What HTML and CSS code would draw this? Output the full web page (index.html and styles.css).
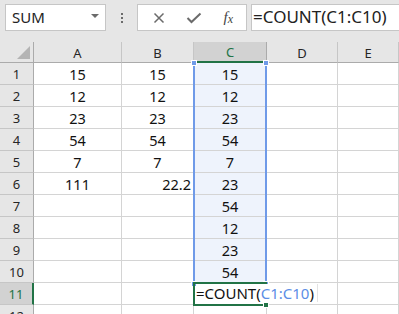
FILE: index.html
```html
<!DOCTYPE html>
<html lang="en">
<head>
    <meta charset="UTF-8">
    <title>Sheet</title>
    <link rel="stylesheet" href="styles.css">
</head>
<body>
    <div class="toolbar">
        <div class="name-box">
            <span>SUM</span>
            <span class="caret"></span>
        </div>
        <div class="grip"><i></i><i></i><i></i></div>
        <div class="fx-buttons">
            <svg width="12" height="12" viewBox="0 0 12 12"><path d="M1.5 1.5 L10.5 10.5 M10.5 1.5 L1.5 10.5" stroke="#6b6b6b" stroke-width="1.5" fill="none"/></svg>
            <svg width="16" height="12" viewBox="0 0 16 12"><path d="M1.5 6 L5.5 10 L14.5 1.5" stroke="#6b6b6b" stroke-width="2" fill="none"/></svg>
            <span class="fx">f<sub>x</sub></span>
        </div>
        <div class="formula-input">=COUNT(C1:C10)</div>
    </div>

    <div class="sheet" id="sheet">
        <div class="corner"><span class="tri"></span></div>
        <div class="col-head">A</div>
        <div class="col-head">B</div>
        <div class="col-head active">C</div>
        <div class="col-head">D</div>
        <div class="col-head">E</div>
    </div>

    <script src="script.js"></script>
</body>
</html>
```

FILE: styles.css
```css
* {
    margin: 0;
    padding: 0;
    box-sizing: border-box;
}

body {
    font-family: 'Noto Sans', 'Segoe UI', sans-serif;
    background: #fff;
    width: 399px;
    height: 314px;
    overflow: hidden;
    color: #000;
}

/* formula bar */
.toolbar {
    height: 42px;
    background: #e6e6e6;
    display: flex;
    align-items: flex-start;
    padding: 4px 0 0 5px;
}

.name-box {
    width: 101px;
    height: 27px;
    background: #fff;
    border: 1px solid #c6c6c6;
    display: flex;
    align-items: center;
    justify-content: space-between;
    padding: 0 6px 1px 6px;
    font-size: 15px;
    color: #222;
}

.caret {
    width: 0;
    height: 0;
    border-left: 4px solid transparent;
    border-right: 4px solid transparent;
    border-top: 4px solid #6b6b6b;
    margin-bottom: 2px;
}

.grip {
    width: 31px;
    height: 27px;
    display: flex;
    flex-direction: column;
    align-items: center;
    justify-content: center;
    gap: 2px;
}

.grip i {
    display: block;
    width: 2px;
    height: 2px;
    background: #6b6b6b;
}

.fx-buttons {
    width: 110px;
    height: 27px;
    background: #fff;
    border: 1px solid #c6c6c6;
    display: flex;
    align-items: center;
    justify-content: space-between;
    padding: 0 13px 0 15px;
}

.fx {
    font-family: 'Liberation Serif', serif;
    font-style: italic;
    font-size: 15px;
    color: #444;
}

.fx sub {
    font-size: 12px;
    vertical-align: -1px;
}

.formula-input {
    flex: 1;
    height: 27px;
    margin-left: 4px;
    background: #fff;
    border: 1px solid #c6c6c6;
    border-right: none;
    font-size: 17px;
    line-height: 24px;
    padding-left: 1px;
    color: #222;
    white-space: nowrap;
}

/* grid */
.sheet {
    display: grid;
    grid-template-columns: 34px 88px 72px 73px 71px 61px;
    grid-template-rows: 21px repeat(12, 22px);
    font-size: 14.5px;
}

.corner,
.col-head,
.row-head {
    background: #e6e6e6;
    color: #262626;
    font-size: 13px;
    display: flex;
    align-items: center;
    justify-content: center;
}

.corner {
    border-right: 1px solid #ababab;
    border-bottom: 1px solid #ababab;
    position: relative;
}

.tri {
    position: absolute;
    right: 3px;
    bottom: 3px;
    width: 0;
    height: 0;
    border-left: 13px solid transparent;
    border-bottom: 13px solid #b4b4b4;
}

.col-head {
    border-right: 1px solid #c6c6c6;
    border-bottom: 1px solid #ababab;
    padding-top: 1px;
}

.col-head.active {
    background: #d2d2d2;
    color: #217346;
    border-right-color: #ababab;
    border-bottom: 2px solid #217346;
}

.row-head {
    border-right: 1px solid #ababab;
    border-bottom: 1px solid #c6c6c6;
    padding-top: 1px;
}

.row-head.active {
    background: #d2d2d2;
    color: #217346;
    border-right: 2px solid #217346;
}

.cell {
    border-right: 1px solid #d4d4d4;
    border-bottom: 1px solid #d4d4d4;
    display: flex;
    align-items: center;
    justify-content: center;
    padding-top: 1px;
    color: #111;
    white-space: nowrap;
}

.cell.right {
    justify-content: flex-end;
    padding-right: 2px;
}

.cell.sel {
    background: #eef3fc;
}

/* selection and active cell */
.range {
    grid-column: 4;
    grid-row: 2 / 12;
    margin: 0 0 -1px -1px;
    border-left: 2px solid #6f9ae8;
    border-right: 2px solid #6f9ae8;
    position: relative;
    z-index: 2;
}

.handle {
    position: absolute;
    width: 6px;
    height: 6px;
    background: #6f9ae8;
    border: 1px solid #fff;
}

.active-cell {
    grid-column: 4;
    grid-row: 12;
    margin: -1px 0 -1px -1px;
    border: 2px solid #217346;
    position: relative;
    z-index: 3;
    overflow: visible;
}

.edit {
    position: absolute;
    left: 1px;
    top: 0;
    height: 18px;
    padding-right: 3px;
    background: #fff;
    border-right: 1px solid #e3e3e3;
    font-size: 15px;
    line-height: 18px;
    white-space: nowrap;
    color: #111;
}

.edit .ref {
    color: #5b8ee6;
}

.fill {
    position: absolute;
    right: -4px;
    bottom: -4px;
    width: 6px;
    height: 6px;
    background: #217346;
    border: 1px solid #fff;
}
```

FILE: script.js
```js
// column values per row
const data = [
    ["15", "15", "15"],
    ["12", "12", "12"],
    ["23", "23", "23"],
    ["54", "54", "54"],
    ["7", "7", "7"],
    ["111", "22.2", "23"],
    ["", "", "54"],
    ["", "", "12"],
    ["", "", "23"],
    ["", "", "54"],
    ["", "", ""],
    ["", "", ""]
];

const sheet = document.getElementById("sheet");

data.forEach((row, i) => {
    const head = document.createElement("div");
    head.className = "row-head" + (i === 10 ? " active" : "");
    head.textContent = i + 1;
    head.style.gridRow = i + 2;
    head.style.gridColumn = 1;
    sheet.appendChild(head);

    for (let c = 0; c < 5; c++) {
        const cell = document.createElement("div");
        cell.className = "cell";
        const val = row[c] || "";
        if (val === "22.2") cell.classList.add("right");
        if (c === 2 && i < 10) cell.classList.add("sel");
        cell.textContent = val;
        cell.style.gridRow = i + 2;
        cell.style.gridColumn = c + 2;
        sheet.appendChild(cell);
    }
});

// selection outline over C1:C10, handles at the four corners
const range = document.createElement("div");
range.className = "range";
const corners = [
    { top: "-3px", left: "-4px" },
    { top: "-3px", right: "-4px" },
    { bottom: "-3px", left: "-4px" },
    { bottom: "-3px", right: "-4px" }
];
corners.forEach(pos => {
    const h = document.createElement("span");
    h.className = "handle";
    Object.assign(h.style, pos);
    range.appendChild(h);
});
sheet.appendChild(range);

// active cell C11 being edited
const active = document.createElement("div");
active.className = "active-cell";
active.innerHTML = '<span class="edit">=COUNT(<span class="ref">C1:C10</span>)</span><span class="fill"></span>';
sheet.appendChild(active);
```
